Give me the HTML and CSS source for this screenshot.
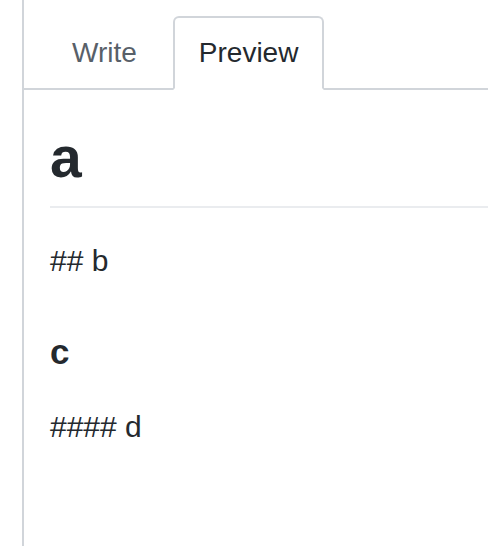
FILE: index.html
```html
<!DOCTYPE html>
<html>
<head>
<meta charset="utf-8">
<link rel="stylesheet" href="styles.css">
</head>
<body>
<div class="editor">
  <div class="tabnav">
    <div class="tab">Write</div>
    <div class="tab selected">Preview</div>
  </div>
  <div class="markdown-body">
    <h1>a</h1>
    <p>## b</p>
    <h3>c</h3>
    <p>#### d</p>
  </div>
</div>
</body>
</html>
```
FILE: styles.css
```css
html, body {
  margin: 0;
  padding: 0;
  background: #fff;
}
body {
  font-family: "Liberation Sans", Arial, sans-serif;
  color: #24292e;
  overflow: hidden;
}
.editor {
  margin-left: 22px;
  border-left: 2px solid #d1d5da;
  min-height: 100vh;
  box-sizing: border-box;
}
.tabnav {
  display: flex;
  padding: 16px 0 0 22px;
  border-bottom: 2px solid #d1d5da;
  gap: 10px;
}
.tab {
  font-size: 28px;
  line-height: 38px;
  padding: 16px 24px;
  border: 2px solid transparent;
  border-radius: 6px 6px 0 0;
  margin-bottom: -2px;
  color: #586069;
}
.tab.selected {
  color: #24292e;
  background: #fff;
  border-color: #d1d5da;
  border-bottom-color: #fff;
}
.markdown-body {
  padding: 32px 0 0 26px;
  font-size: 30px;
  line-height: 42px;
}
.markdown-body h1 {
  font-size: 57px;
  line-height: 70px;
  font-weight: 700;
  margin: 0 0 32px;
  padding-bottom: 14px;
  border-bottom: 2px solid #eaecef;
}
.markdown-body p {
  margin: 0 0 32px;
}
.markdown-body h3 {
  font-size: 35px;
  line-height: 44px;
  font-weight: 700;
  margin: 48px 0 32px;
}
```
